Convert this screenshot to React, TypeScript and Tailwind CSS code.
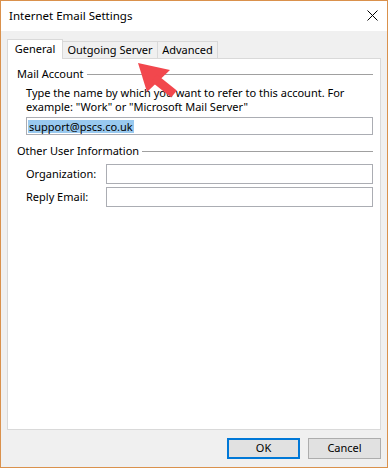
import React from 'react'

const font = { fontFamily: '"Noto Sans", "Liberation Sans", sans-serif' }

function GroupHeader({ label }: { label: string }) {
  return (
    <div className="flex items-center h-[14px]">
      <span className="leading-[14px]">{label}</span>
      <div className="flex-1 h-px bg-[#a0a0a0] ml-[3px]" />
    </div>
  )
}

function Field({ label }: { label: string }) {
  return (
    <div className="flex items-center ml-[9px]">
      <span className="w-[80px] leading-[14px]">{label}</span>
      <div className="flex-1 h-[20px] border border-[#abadb3] bg-white" />
    </div>
  )
}

export default function App() {
  return (
    <div
      className="relative w-[388px] h-[468px] border border-[#da914c] bg-[#f0f0f0] flex flex-col text-[11px] text-black"
      style={font}
    >
      {/* title bar */}
      <div className="h-[30px] bg-white flex items-center justify-between pl-[8px]">
        <span className="text-[11.5px]">Internet Email Settings</span>
        <svg width="11" height="11" viewBox="0 0 11 11" className="mr-[9px] mt-[-1px]">
          <path d="M0.5 0.5 L10.5 10.5 M10.5 0.5 L0.5 10.5" stroke="#000" strokeWidth="1" />
        </svg>
      </div>

      <div className="flex-1 flex flex-col px-[6px] pt-[8px] pb-[8px]">
        {/* tabs */}
        <div className="flex items-end h-[19px]">
          <div className="relative z-10 -mb-px w-[56px] h-[20px] border border-b-0 border-[#d9d9d9] bg-white flex items-center justify-center pb-[1px]">
            General
          </div>
          <div className="w-[95px] h-[17px] border border-l-0 border-b-0 border-[#d9d9d9] flex items-center justify-center">
            Outgoing Server
          </div>
          <div className="w-[60px] h-[17px] border border-l-0 border-b-0 border-[#d9d9d9] flex items-center justify-center">
            Advanced
          </div>
        </div>

        {/* panel */}
        <div className="flex-1 bg-white border border-[#d9d9d9] pl-[9px] pr-[7px] pt-[8px] flex flex-col">
          <GroupHeader label="Mail Account" />
          <div className="ml-[9px] mt-[5px] leading-[14px]">
            Type the name by which you want to refer to this account. For example: "Work" or "Microsoft Mail Server"
          </div>
          <div className="ml-[9px] mt-[3px] h-[18px] border border-[#abadb3] flex items-center pl-[1px]">
            <span className="bg-[#99c9ef] leading-[13px] px-px">support@pscs.co.uk</span>
          </div>

          <div className="mt-[9px]">
            <GroupHeader label="Other User Information" />
          </div>
          <div className="mt-[6px]">
            <Field label="Organization:" />
          </div>
          <div className="mt-[3px]">
            <Field label="Reply Email:" />
          </div>
        </div>

        {/* buttons */}
        <div className="flex justify-end gap-[8px] mt-[8px]">
          <button className="w-[73px] h-[21px] border-2 border-[#0078d7] bg-[#e1e1e1] flex items-center justify-center">
            OK
          </button>
          <button className="w-[73px] h-[21px] border border-[#adadad] bg-[#e1e1e1] flex items-center justify-center">
            Cancel
          </button>
        </div>
      </div>

      {/* annotation arrow */}
      <svg className="absolute left-0 top-0 pointer-events-none" width="388" height="468">
        <polygon points="137,62 169,69 146,91" fill="#f2474d" />
        <line x1="153" y1="77" x2="173" y2="93" stroke="#f2474d" strokeWidth="9" />
      </svg>
    </div>
  )
}
